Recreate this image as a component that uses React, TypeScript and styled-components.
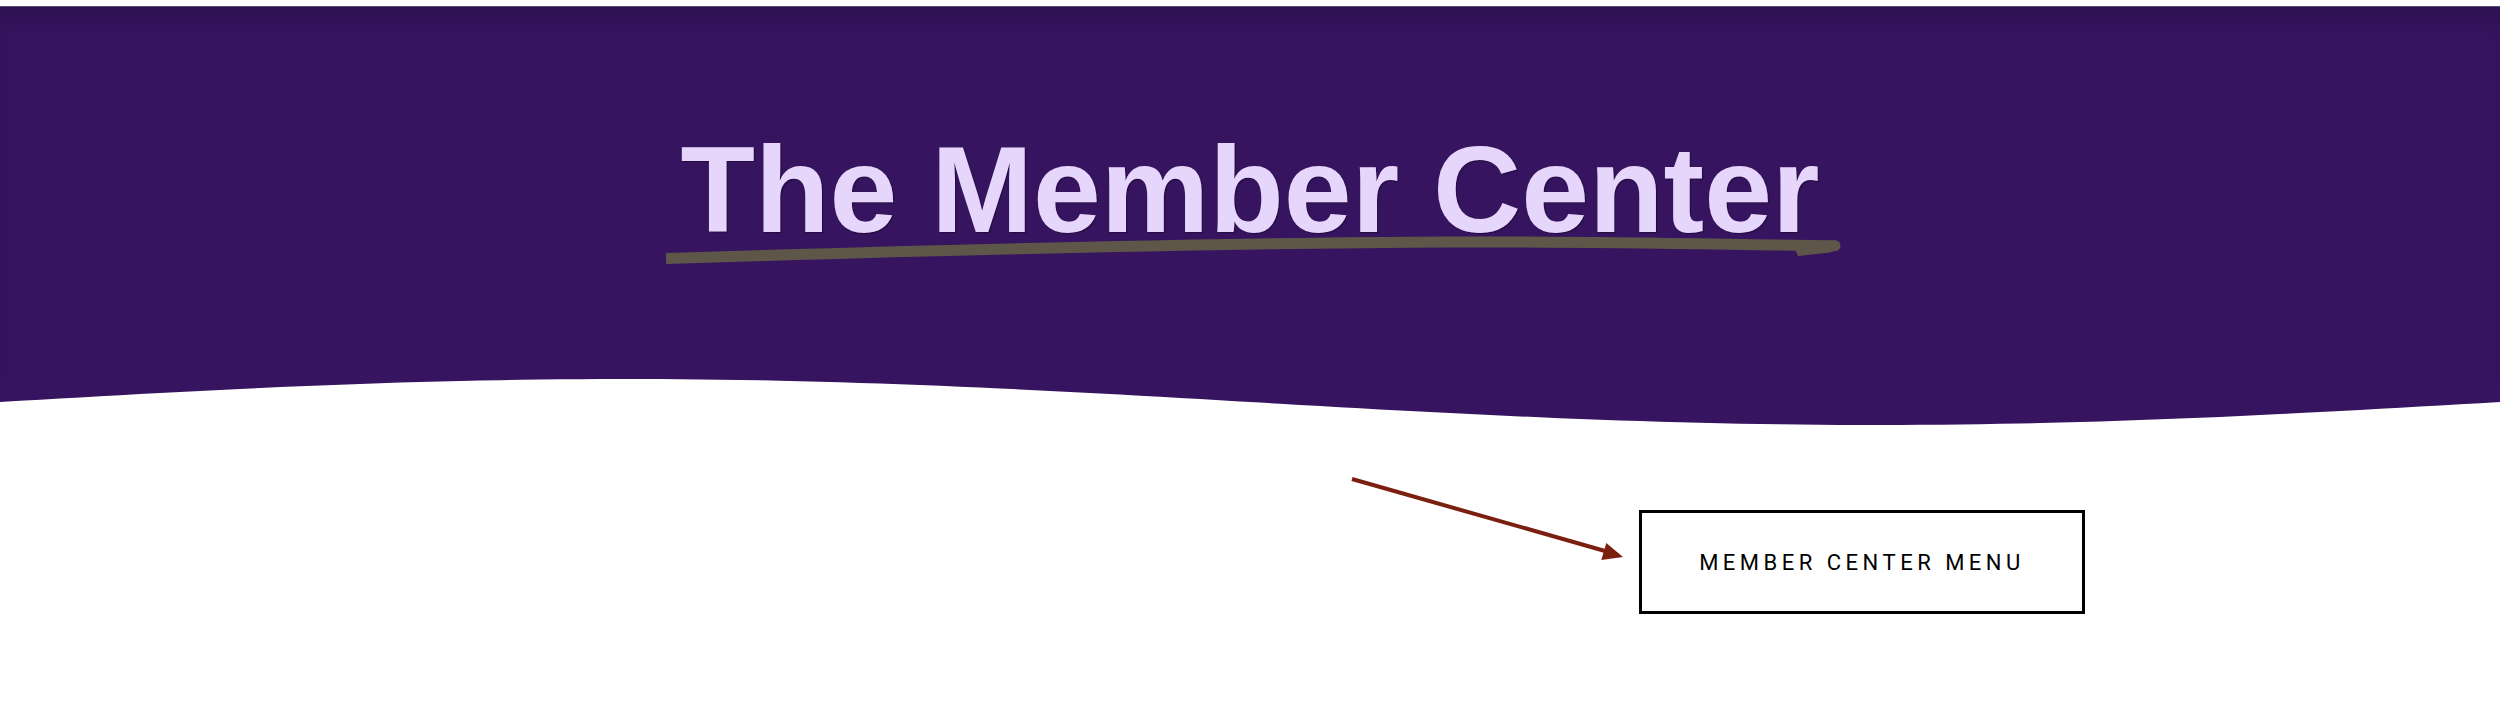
import React from "react";
import styled, { createGlobalStyle } from "styled-components";

const GlobalStyle = createGlobalStyle`
  html, body {
    margin: 0;
    padding: 0;
    background: #ffffff;
  }
  * {
    box-sizing: border-box;
  }
`;

const PURPLE = "#36145f";

const Page = styled.div`
  padding-top: 6px;
  min-height: 703px;
  background: #ffffff;
`;

const Hero = styled.header`
  position: relative;
  background: ${PURPLE};
  border-top: 1px solid #5d4a7a;
  box-shadow: inset 0 22px 26px -14px rgba(0, 0, 0, 0.22);
`;

const HeroInner = styled.div`
  display: flex;
  justify-content: center;
  padding: 122px 0 128px;
`;

const Title = styled.h1`
  margin: 0;
  font-family: "Liberation Sans", Arial, sans-serif;
  font-weight: 700;
  font-size: 122px;
  line-height: 1;
  color: #e7d6fb;
  text-shadow: 1px 1px 1px rgba(18, 4, 36, 0.55);
  white-space: nowrap;
`;

const Underline = styled.svg`
  position: absolute;
  left: calc(50% - 590px);
  top: 227px;
  width: 1185px;
  height: 28px;
  overflow: visible;
`;

const Wave = styled.svg`
  display: block;
  width: 100%;
  height: 46px;
  background: #ffffff;
`;

const Content = styled.section`
  display: grid;
  grid-template-columns: 1fr 1fr;
  padding-top: 85px;
`;

const RightColumn = styled.div`
  display: flex;
  justify-content: center;
  padding-right: 26px;
`;

const ButtonWrap = styled.div`
  position: relative;
`;

const MenuButton = styled.a`
  display: flex;
  align-items: center;
  justify-content: center;
  width: 446px;
  height: 104px;
  border: 3px solid #000000;
  background: #ffffff;
  color: #000000;
  font-family: Roboto, "Liberation Sans", sans-serif;
  font-size: 22px;
  font-weight: 400;
  letter-spacing: 4.5px;
  text-transform: uppercase;
  text-decoration: none;
  cursor: pointer;
`;

const Arrow = styled.svg`
  position: absolute;
  left: -290px;
  top: -35px;
  width: 277px;
  height: 90px;
  overflow: visible;
`;

const wavePath = (() => {
  const pts: string[] = ["M0,0"];
  for (let x = 0; x <= 2500; x += 20) {
    const y = 23 - 23 * Math.sin((2 * Math.PI * x) / 2500);
    pts.push(`L${x},${y.toFixed(2)}`);
  }
  pts.push("L2500,0 Z");
  return pts.join(" ");
})();

const App: React.FC = () => {
  return (
    <Page>
      <GlobalStyle />
      <Hero>
        <HeroInner>
          <Title>The Member Center</Title>
        </HeroInner>
        <Underline viewBox="0 0 1185 28">
          <path
            d="M6,24.5 C250,17 550,9 790,8 C950,7.5 1080,11 1175,11.7"
            fill="none"
            stroke="#5e5649"
            strokeWidth={11}
            strokeLinecap="butt"
          />
          <circle cx={1175} cy={11.7} r={5.5} fill="#5e5649" />
          <polygon points="1135,15 1178,15 1170,18.5 1138,22" fill="#5e5649" />
        </Underline>
      </Hero>
      <Wave viewBox="0 0 2500 46" preserveAspectRatio="none">
        <path d={wavePath} fill={PURPLE} />
      </Wave>
      <Content>
        <div />
        <RightColumn>
          <ButtonWrap>
            <Arrow viewBox="0 0 277 90">
              <line
                x1={3}
                y1={4}
                x2={256}
                y2={76}
                stroke="#7b1f10"
                strokeWidth={4}
              />
              <polygon points="274,82 252.3,85.1 257.3,67.9" fill="#7b1f10" />
            </Arrow>
            <MenuButton>Member Center Menu</MenuButton>
          </ButtonWrap>
        </RightColumn>
      </Content>
    </Page>
  );
};

export default App;
